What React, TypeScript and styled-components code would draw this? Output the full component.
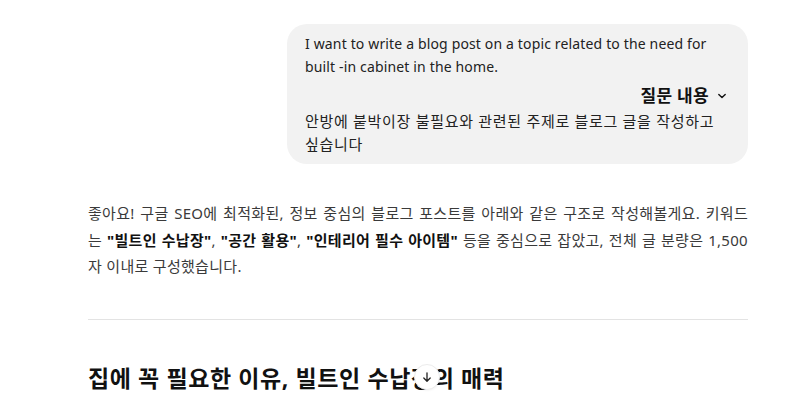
import styled, {createGlobalStyle} from "styled-components"

const GlobalStyle = createGlobalStyle`
    html, body {
        margin: 0;
        padding: 0;
        background: #fff;
        overflow: hidden;
    }
    body {
        font-family: "Noto Sans", "Noto Sans CJK KR", sans-serif;
        color: #1f1f1f;
    }
`

const Page = styled.div`
    width: 800px;
    height: 405px;
    position: relative;
    overflow: hidden;
    padding: 24px 52px 0 88px;
    box-sizing: border-box;
`

const UserRow = styled.div`
    display: flex;
    justify-content: flex-end;
`

const Bubble = styled.div`
    width: 461px;
    box-sizing: border-box;
    background: #f2f2f2;
    border-radius: 20px;
    padding: 8px 18px 8px;
    color: #222;
`

const BubbleText = styled.p<{ $korean?: boolean }>`
    margin: 0;
    white-space: nowrap;
    font-size: ${p => (p.$korean ? "15px" : "14px")};
    letter-spacing: ${p => (p.$korean ? "0.7px" : "0.15px")};
    line-height: 23px;
`

const QuestionToggle = styled.div`
    display: flex;
    justify-content: flex-end;
    align-items: center;
    gap: 8px;
    margin: 6px 3px 2px 0;
    font-size: 17px;
    font-weight: 700;
    letter-spacing: 0.3px;
    color: #111;
    line-height: 24px;
`

const Answer = styled.div`
    margin: 36px 0 0;
    font-size: 15px;
    line-height: 26.5px;
    color: #3a3a3a;

    strong {
        font-weight: 700;
        color: #111;
    }
`

const AnswerLine = styled.span<{ $fill?: boolean }>`
    display: block;
    white-space: nowrap;
    letter-spacing: 0.3px;
    text-align-last: ${p => (p.$fill ? "justify" : "auto")};
`

const Divider = styled.hr`
    border: 0;
    border-top: 1px solid #e3e3e3;
    margin: 39px 0 0;
`

const Heading = styled.h2`
    margin: 43px 0 0;
    font-size: 23px;
    font-weight: 700;
    letter-spacing: 0.6px;
    color: #111;
    line-height: 30px;
`

const ScrollButton = styled.button`
    position: absolute;
    left: 414px;
    top: 364px;
    width: 26px;
    height: 26px;
    border-radius: 50%;
    border: 1px solid #ececec;
    background: #fff;
    padding: 0;
    display: flex;
    align-items: center;
    justify-content: center;
    box-shadow: 0 1px 2px rgba(0, 0, 0, 0.04);
`

const Chevron = () => (
    <svg width="10" height="10" viewBox="0 0 10 10" fill="none">
        <path d="M1.8 3.4L5 6.6L8.2 3.4" stroke="#111" strokeWidth="1.4" strokeLinecap="round" strokeLinejoin="round"/>
    </svg>
)

const ArrowDown = () => (
    <svg width="12" height="12" viewBox="0 0 12 12" fill="none">
        <path d="M6 1.8v8.4M2.8 7L6 10.2L9.2 7" stroke="#222" strokeWidth="1.3" strokeLinecap="round" strokeLinejoin="round"/>
    </svg>
)

export default function App() {
    return (
        <>
            <GlobalStyle/>
            <Page>
                <UserRow>
                    <Bubble>
                        <BubbleText>I want to write a blog post on a topic related to the need for</BubbleText>
                        <BubbleText>built -in cabinet in the home.</BubbleText>
                        <QuestionToggle>
                            질문 내용 <Chevron/>
                        </QuestionToggle>
                        <BubbleText $korean>안방에 붙박이장 불필요와 관련된 주제로 블로그 글을 작성하고</BubbleText>
                        <BubbleText $korean>싶습니다</BubbleText>
                    </Bubble>
                </UserRow>
                <Answer>
                    <AnswerLine $fill>
                        좋아요! 구글 SEO에 최적화된, 정보 중심의 블로그 포스트를 아래와 같은 구조로 작성해볼게요. 키워드
                    </AnswerLine>
                    <AnswerLine $fill>
                        는 <strong>"빌트인 수납장"</strong>, <strong>"공간 활용"</strong>,{" "}
                        <strong>"인테리어 필수 아이템"</strong> 등을 중심으로 잡았고, 전체 글 분량은 1,500
                    </AnswerLine>
                    <AnswerLine>자 이내로 구성했습니다.</AnswerLine>
                </Answer>
                <Divider/>
                <Heading>집에 꼭 필요한 이유, 빌트인 수납장의 매력</Heading>
                <ScrollButton aria-label="scroll down">
                    <ArrowDown/>
                </ScrollButton>
            </Page>
        </>
    )
}
